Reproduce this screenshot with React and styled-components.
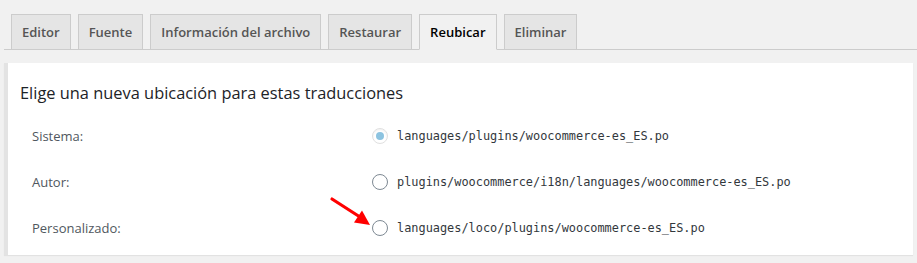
import React from "react";
import styled, { createGlobalStyle } from "styled-components";

const Global = createGlobalStyle`
  html, body { margin: 0; padding: 0; background: #f1f1f1; }
  body { font-family: "Open Sans", "Noto Sans", sans-serif; }
`;

const Page = styled.div`
  position: relative;
  padding-top: 14px;
  width: 917px;
  height: 263px;
  box-sizing: border-box;
`;

const TabBar = styled.div`
  display: flex;
  align-items: flex-end;
  gap: 7px;
  margin-left: 4px;
  padding-left: 7px;
  border-bottom: 1px solid #ccc;
  height: 35px;
`;

const Tab = styled.div`
  box-sizing: border-box;
  height: ${(p) => (p.$active ? "36px" : "35px")};
  margin-bottom: ${(p) => (p.$active ? "-1px" : "0")};
  padding: 0 10px;
  display: flex;
  align-items: center;
  border: 1px solid #ccc;
  border-bottom: ${(p) => (p.$active ? "1px solid #f1f1f1" : "none")};
  background: ${(p) => (p.$active ? "#f1f1f1" : "#e5e5e5")};
  color: ${(p) => (p.$active ? "#000" : "#555")};
  font-size: 13px;
  font-weight: 600;
  white-space: nowrap;
`;

const Panel = styled.div`
  margin: 13px 4px 0 4px;
  background: #fff;
  border-left: 4px solid #e3e3e3;
  box-shadow: 0 1px 1px rgba(0, 0, 0, 0.06);
  padding: 18px 12px 4px 12px;
  height: 192px;
  box-sizing: border-box;
`;

const Heading = styled.h2`
  margin: 0 0 8px 0;
  font-size: 16.4px;
  line-height: 24px;
  font-weight: 500;
  color: #1d2327;
`;

const Rows = styled.div`
  margin-left: 12px;
  display: grid;
  grid-template-columns: 340px 1fr;
  grid-auto-rows: 46px;
`;

const Label = styled.div`
  display: flex;
  align-items: center;
  font-size: 13px;
  color: #50575e;
`;

const Option = styled.label`
  display: flex;
  align-items: center;
  gap: 9px;
`;

const Radio = styled.span`
  box-sizing: border-box;
  width: 16px;
  height: 16px;
  border-radius: 50%;
  border: 1px solid ${(p) => (p.$checked ? "#e0e0e0" : "#7e8993")};
  background: #fff;
  display: flex;
  align-items: center;
  justify-content: center;
  box-shadow: ${(p) => (p.$checked ? "inset 0 1px 2px rgba(0,0,0,0.07)" : "none")};
  &::after {
    content: "";
    display: ${(p) => (p.$checked ? "block" : "none")};
    width: 8px;
    height: 8px;
    border-radius: 50%;
    background: #8cc3e0;
  }
`;

const Path = styled.code`
  font-family: "DejaVu Sans Mono", "Liberation Mono", monospace;
  font-size: 11.9px;
  color: #32373c;
`;

const Arrow = styled.svg`
  position: absolute;
  left: 328px;
  top: 195px;
`;

const tabs = ["Editor", "Fuente", "Información del archivo", "Restaurar", "Reubicar", "Eliminar"];

const options = [
  { label: "Sistema:", path: "languages/plugins/woocommerce-es_ES.po", checked: true },
  { label: "Autor:", path: "plugins/woocommerce/i18n/languages/woocommerce-es_ES.po" },
  { label: "Personalizado:", path: "languages/loco/plugins/woocommerce-es_ES.po" },
];

export default function App() {
  return (
    <>
      <Global />
      <Page>
        <TabBar>
          {tabs.map((t) => (
            <Tab key={t} $active={t === "Reubicar"}>
              {t}
            </Tab>
          ))}
        </TabBar>
        <Panel>
          <Heading>Elige una nueva ubicación para estas traducciones</Heading>
          <Rows>
            {options.map((o) => (
              <React.Fragment key={o.label}>
                <Label>{o.label}</Label>
                <Option>
                  <Radio $checked={o.checked} />
                  <Path>{o.path}</Path>
                </Option>
              </React.Fragment>
            ))}
          </Rows>
        </Panel>
        <Arrow width="46" height="34" viewBox="0 0 46 34">
          <line x1="4" y1="4" x2="32" y2="22" stroke="#f00" strokeWidth="3.2" strokeLinecap="round" />
          <polygon points="42,30 26,27.5 34,15.5" fill="#f00" />
        </Arrow>
      </Page>
    </>
  );
}
